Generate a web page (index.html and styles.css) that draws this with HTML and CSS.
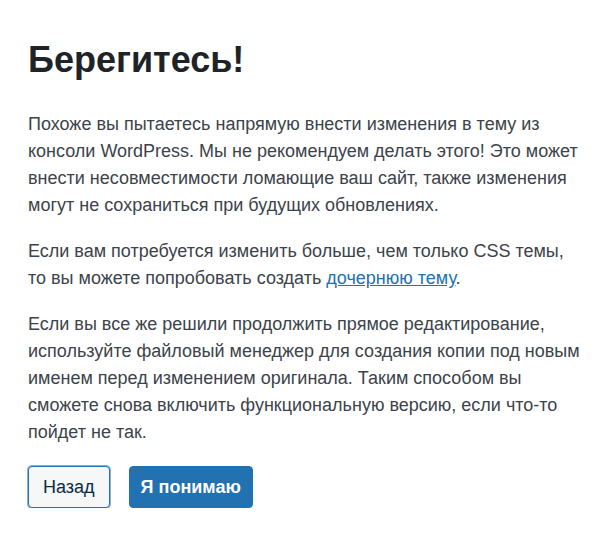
FILE: index.html
```html
<!DOCTYPE html>
<html lang="ru">
<head>
  <meta charset="UTF-8" />
  <meta name="viewport" content="width=device-width, initial-scale=1.0" />
  <title>Берегитесь!</title>
  <link rel="stylesheet" href="styles.css">
</head>
<body>
  <div class="warning">
    <h1 class="warning-title">Берегитесь!</h1>
    <p>Похоже вы пытаетесь напрямую внести изменения в тему из консоли WordPress. Мы не рекомендуем делать этого! Это может внести несовместимости ломающие ваш сайт, также изменения могут не сохраниться при будущих обновлениях.</p>
    <p>Если вам потребуется изменить больше, чем только CSS темы, то вы можете попробовать создать <a href="#">дочернюю тему</a>.</p>
    <p>Если вы все же решили продолжить прямое редактирование, используйте файловый менеджер для создания копии под новым именем перед изменением оригинала. Таким способом вы сможете снова включить функциональную версию, если что-то пойдет не так.</p>
    <div class="actions">
      <button class="btn btn-secondary">Назад</button>
      <button class="btn btn-primary">Я понимаю</button>
    </div>
  </div>
</body>
</html>
```

FILE: styles.css
```css
body {
  margin: 0;
  background: #fff;
  font-family: "Liberation Sans", Arial, sans-serif;
  color: #3c434a;
}
.warning {
  max-width: 555px;
  padding: 38px 28px 0 28px;
}
.warning-title {
  margin: 0 0 30px 0;
  font-size: 36px;
  line-height: 1.2;
  font-weight: bold;
  color: #1d2327;
}
.warning p {
  margin: 0 0 19px 0;
  font-size: 18px;
  line-height: 27px;
}
.warning a {
  color: #2271b1;
  text-decoration: underline;
}
.actions {
  display: flex;
  gap: 19px;
  margin-top: 20px;
}
.btn {
  font-family: inherit;
  font-size: 18px;
  height: 42px;
  padding: 0 14px;
  border-radius: 4px;
  cursor: pointer;
}
.btn-secondary {
  background: #f6f7f7;
  border: 1px solid #2271b1;
  color: #0a2b45;
  box-shadow: 0 0 0 1px #8fb1cf;
}
.btn-primary {
  padding: 0 11px;
  background: #2271b1;
  border: 1px solid #2271b1;
  color: #fff;
  font-weight: bold;
}
```
